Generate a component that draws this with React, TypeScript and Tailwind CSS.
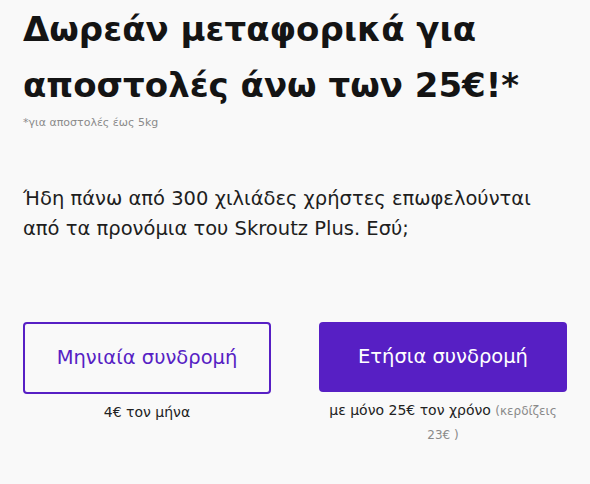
export default function App() {
  return (
    <div className="min-h-screen w-full bg-[#f9f9f9] font-['DejaVu_Sans',sans-serif] text-[#141414]">
      <div className="px-[23px]">
        <h1 className="pt-[1px] text-[34px] font-bold leading-[56px]">
          Δωρεάν μεταφορικά για αποστολές άνω των 25€!*
        </h1>
        <p className="mt-[2px] text-[11px] text-[#8a8a8a]">*για αποστολές έως 5kg</p>
        <p className="mt-[52px] max-w-[530px] text-[19.5px] leading-[30px] text-[#1e1e1e]">
          Ήδη πάνω από 300 χιλιάδες χρήστες επωφελούνται από τα προνόμια του Skroutz Plus. Εσύ;
        </p>
        <div className="mt-[78px] flex gap-[48px]">
          <div className="flex w-[248px] flex-col items-center">
            <button className="flex h-[72px] w-full items-center justify-center rounded-[4px] border-2 border-[#571fc4] text-[19.5px] text-[#571fc4]">
              Μηνιαία συνδρομή
            </button>
            <p className="mt-[8px] text-[14px] text-[#222]">4€ τον μήνα</p>
          </div>
          <div className="flex w-[248px] flex-col items-center">
            <button className="flex h-[70px] w-full items-center justify-center rounded-[4px] bg-[#571fc4] text-[19.5px] text-white">
              Ετήσια συνδρομή
            </button>
            <p className="mt-[7px] max-w-[232px] text-center text-[14px] leading-[23px] text-[#222]">
              με μόνο 25€ τον χρόνο <span className="text-[12px] text-[#8a8a8a]">(κερδίζεις</span>{' '}
              <span className="text-[12px] text-[#8a8a8a]">23€ )</span>
            </p>
          </div>
        </div>
      </div>
    </div>
  );
}
